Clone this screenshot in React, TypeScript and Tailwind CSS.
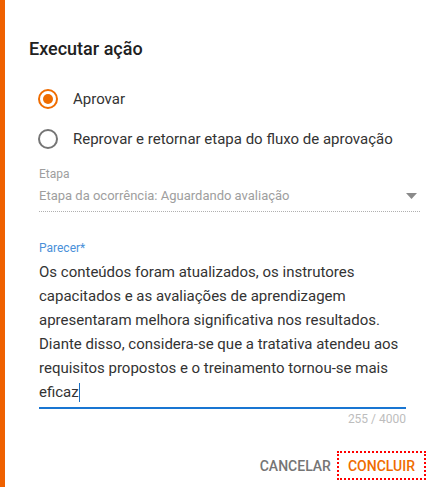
import React from 'react';

const font = { fontFamily: 'Roboto, "Liberation Sans", sans-serif' };

const Radio: React.FC<{ checked?: boolean; label: string }> = ({ checked, label }) => (
    <div className="flex items-center h-10">
        <div className={`w-5 h-5 rounded-full border-2 flex items-center justify-center ${checked ? 'border-[#ef6c00]' : 'border-[#757575]'}`}>
            {checked && <div className="w-2.5 h-2.5 rounded-full bg-[#ef6c00]" />}
        </div>
        <span className="ml-[15px] text-[15px] text-[#333333]">{label}</span>
    </div>
);

const lines = [
    'Os conteúdos foram atualizados, os instrutores',
    'capacitados e as avaliações de aprendizagem',
    'apresentaram melhora significativa nos resultados.',
    'Diante disso, considera-se que a tratativa atendeu aos',
    'requisitos propostos e o treinamento tornou-se mais',
];

export default function App() {
    return (
        <div className="w-[438px] h-[487px] bg-white flex" style={font}>
            <div className="w-[5px] bg-[#ef6100] shrink-0" />
            <div className="flex-1 pl-6 pt-[37px]">
                <h2 className="text-lg leading-6 font-medium text-[#212121]">Executar ação</h2>

                <div className="mt-[18px] pl-[9px]">
                    <Radio checked label="Aprovar" />
                    <Radio label="Reprovar e retornar etapa do fluxo de aprovação" />
                </div>

                <div className="mt-[7px] ml-[10px] w-[381px]">
                    <div className="text-xs leading-4 text-[#9e9e9e]">Etapa</div>
                    <div className="flex items-center justify-between mt-[4px] h-5">
                        <span className="text-[13px] text-[#9e9e9e]">Etapa da ocorrência: Aguardando avaliação</span>
                        <svg width="11" height="6" viewBox="0 0 11 6" className="mr-[3px]">
                            <path d="M0 0 L11 0 L5.5 6 Z" fill="#8a8a8a" />
                        </svg>
                    </div>
                    <div className="mt-[5px] border-b border-dotted border-[#b0b0b0]" />
                </div>

                <div className="mt-[28px] ml-[10px] w-[367px]">
                    <div className="text-xs leading-4 text-[#4a90d9]">Parecer*</div>
                    <div className="mt-[4px] text-[15px] leading-6 text-[#333333]">
                        {lines.map((l) => (
                            <div key={l} className="whitespace-nowrap">{l}</div>
                        ))}
                        <div className="flex items-center">
                            eficaz<span className="inline-block w-px h-[19px] bg-[#1a6fc4]" />
                        </div>
                    </div>
                    <div className="mt-[3px] h-[2px] bg-[#1976d2]" />
                    <div className="mt-[2px] text-xs leading-4 text-right text-[#bdbdbd]">255 / 4000</div>
                </div>

                <div className="mt-[24px] flex justify-end items-center pr-[12px]">
                    <button className="text-sm font-medium text-[#757575] px-0 mr-[6px] leading-4">CANCELAR</button>
                    <button className="text-sm font-medium text-[#ef6c00] leading-4 border-2 border-dotted border-[#ff0000] h-[29px] px-[9px]">CONCLUIR</button>
                </div>
            </div>
        </div>
    );
}
